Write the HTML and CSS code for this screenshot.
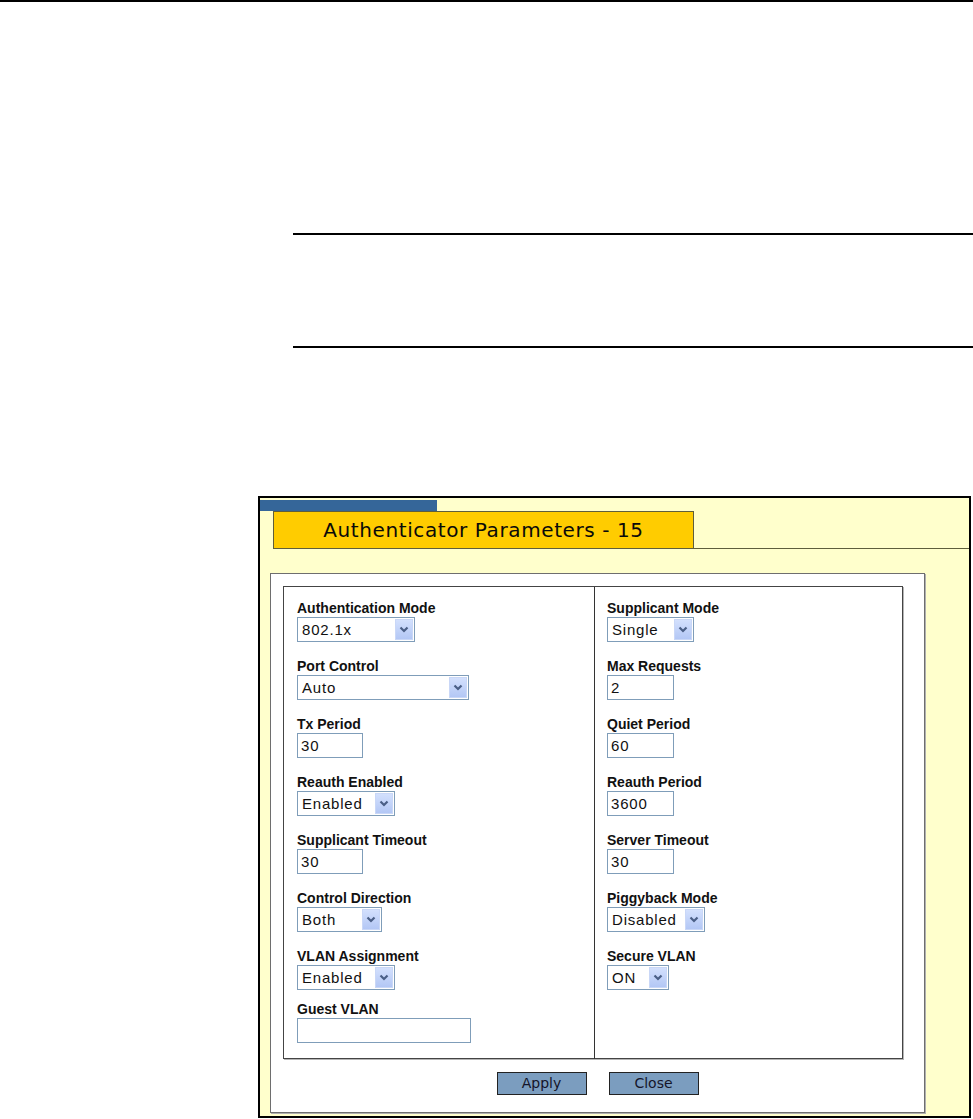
FILE: index.html
```html
<!DOCTYPE html>
<html>
<head>
<meta charset="utf-8">
<title>Authenticator Parameters</title>
<link rel="stylesheet" href="styles.css">
</head>
<body>
<div class="page-rule"></div>
<div class="note"></div>
<div class="frame">
  <div class="tab-strip"></div>
  <div class="header">
    <div class="title">Authenticator Parameters - 15</div>
    <div class="header-fill"></div>
  </div>
  <div class="panel">
    <div class="box">
      <div class="col col-left">
        <div class="field">
          <div class="label">Authentication Mode</div>
          <div class="select w118"><span class="val">802.1x</span><span class="arrow"><svg viewBox="0 0 16 21" width="16" height="21"><path d="M4.5 8.5 L8 12 L11.5 8.5" fill="none" stroke="#4a5f86" stroke-width="2.2"/></svg></span></div>
        </div>
        <div class="field">
          <div class="label">Port Control</div>
          <div class="select w172"><span class="val">Auto</span><span class="arrow"><svg viewBox="0 0 16 21" width="16" height="21"><path d="M4.5 8.5 L8 12 L11.5 8.5" fill="none" stroke="#4a5f86" stroke-width="2.2"/></svg></span></div>
        </div>
        <div class="field">
          <div class="label">Tx Period</div>
          <div class="input w66">30</div>
        </div>
        <div class="field">
          <div class="label">Reauth Enabled</div>
          <div class="select w98"><span class="val">Enabled</span><span class="arrow"><svg viewBox="0 0 16 21" width="16" height="21"><path d="M4.5 8.5 L8 12 L11.5 8.5" fill="none" stroke="#4a5f86" stroke-width="2.2"/></svg></span></div>
        </div>
        <div class="field">
          <div class="label">Supplicant Timeout</div>
          <div class="input w66">30</div>
        </div>
        <div class="field">
          <div class="label">Control Direction</div>
          <div class="select w85"><span class="val">Both</span><span class="arrow"><svg viewBox="0 0 16 21" width="16" height="21"><path d="M4.5 8.5 L8 12 L11.5 8.5" fill="none" stroke="#4a5f86" stroke-width="2.2"/></svg></span></div>
        </div>
        <div class="field">
          <div class="label">VLAN Assignment</div>
          <div class="select w98"><span class="val">Enabled</span><span class="arrow"><svg viewBox="0 0 16 21" width="16" height="21"><path d="M4.5 8.5 L8 12 L11.5 8.5" fill="none" stroke="#4a5f86" stroke-width="2.2"/></svg></span></div>
        </div>
        <div class="field tight">
          <div class="label">Guest VLAN</div>
          <div class="input w174"></div>
        </div>
      </div>
      <div class="col col-right">
        <div class="field">
          <div class="label">Supplicant Mode</div>
          <div class="select w87"><span class="val">Single</span><span class="arrow"><svg viewBox="0 0 16 21" width="16" height="21"><path d="M4.5 8.5 L8 12 L11.5 8.5" fill="none" stroke="#4a5f86" stroke-width="2.2"/></svg></span></div>
        </div>
        <div class="field">
          <div class="label">Max Requests</div>
          <div class="input w67">2</div>
        </div>
        <div class="field">
          <div class="label">Quiet Period</div>
          <div class="input w67">60</div>
        </div>
        <div class="field">
          <div class="label">Reauth Period</div>
          <div class="input w67">3600</div>
        </div>
        <div class="field">
          <div class="label">Server Timeout</div>
          <div class="input w67">30</div>
        </div>
        <div class="field">
          <div class="label">Piggyback Mode</div>
          <div class="select w98"><span class="val">Disabled</span><span class="arrow"><svg viewBox="0 0 16 21" width="16" height="21"><path d="M4.5 8.5 L8 12 L11.5 8.5" fill="none" stroke="#4a5f86" stroke-width="2.2"/></svg></span></div>
        </div>
        <div class="field">
          <div class="label">Secure VLAN</div>
          <div class="select w62"><span class="val">ON</span><span class="arrow"><svg viewBox="0 0 16 21" width="16" height="21"><path d="M4.5 8.5 L8 12 L11.5 8.5" fill="none" stroke="#4a5f86" stroke-width="2.2"/></svg></span></div>
        </div>
      </div>
    </div>
    <div class="buttons">
      <div class="btn">Apply</div>
      <div class="btn">Close</div>
    </div>
  </div>
</div>
</body>
</html>
```
FILE: styles.css
```css
html, body {
  margin: 0;
  padding: 0;
  background: #ffffff;
}
body {
  width: 973px;
  font-family: "Liberation Sans", Arial, sans-serif;
}
.page-rule {
  height: 2px;
  background: #000;
}
.note {
  margin: 231px 0 0 293px;
  height: 111px;
  border-top: 2px solid #000;
  border-bottom: 2px solid #000;
}
.frame {
  margin: 148px 0 0 258px;
  width: 709px;
  height: 615px;
  padding-top: 2px;
  padding-bottom: 1px;
  border: 2px solid #000;
  background: #ffffcc;
}
.tab-strip {
  width: 177px;
  height: 11px;
  background: #356699;
}
.header {
  display: flex;
  height: 38px;
}
.title {
  margin-left: 13px;
  width: 419px;
  height: 36px;
  border: 1px solid #5e5e3c;
  background: #ffcc00;
  font-family: "DejaVu Sans", Verdana, sans-serif;
  font-size: 20px;
  letter-spacing: 0.6px;
  color: #0a0a0a;
  line-height: 36px;
  text-align: center;
}
.header-fill {
  flex: 1;
  border-bottom: 1px solid #5e5e3c;
}
.panel {
  margin: 24px 0 0 10px;
  width: 653px;
  height: 509px;
  padding: 12px 0 17px 0;
  border: 1px solid #6e6e6e;
  box-shadow: 1px 1px 0 #b0b0b0;
  background: #ffffff;
}
.box {
  margin-left: 12px;
  width: 618px;
  height: 471px;
  border: 1px solid #444;
  box-shadow: 1px 1px 0 #b5b5b5;
  display: grid;
  grid-template-columns: 311px 1fr;
}
.col {
  padding-top: 13px;
}
.col-left {
  padding-left: 13px;
  border-right: 1px solid #333;
}
.col-right {
  padding-left: 12px;
}
.field {
  margin-bottom: 16px;
}
.field.tight {
  margin-top: -5px;
}
.label {
  font-size: 14px;
  font-weight: bold;
  line-height: 16px;
  color: #111;
  margin-bottom: 1px;
}
.select, .input {
  box-sizing: border-box;
  height: 25px;
  border: 1px solid #7f9db9;
  background: #fff;
  font-size: 15px;
  letter-spacing: 0.8px;
  color: #111;
  line-height: 23px;
  display: flex;
  align-items: stretch;
}
.input {
  padding-left: 3px;
}
.select .val {
  flex: 1;
  padding-left: 4px;
  white-space: nowrap;
  overflow: hidden;
}
.select .arrow {
  width: 18px;
  margin: 1px;
  border: 1px solid #c9d7f7;
  box-sizing: border-box;
  background: linear-gradient(#d3e0fd, #b3c7f5);
  display: flex;
  align-items: center;
  justify-content: center;
}
.select .arrow svg {
  display: block;
}
.w62 { width: 62px; }
.w66 { width: 66px; }
.w67 { width: 67px; }
.w85 { width: 85px; }
.w87 { width: 87px; }
.w98 { width: 98px; }
.w118 { width: 118px; }
.w172 { width: 172px; }
.w174 { width: 174px; }
.buttons {
  display: flex;
  justify-content: center;
  gap: 22px;
  margin-top: 13px;
}
.btn {
  box-sizing: border-box;
  width: 90px;
  height: 23px;
  border: 1px solid #222;
  background: #7b9dbf;
  font-family: "DejaVu Sans", Verdana, sans-serif;
  font-size: 14px;
  color: #15152a;
  line-height: 21px;
  text-align: center;
}
```
